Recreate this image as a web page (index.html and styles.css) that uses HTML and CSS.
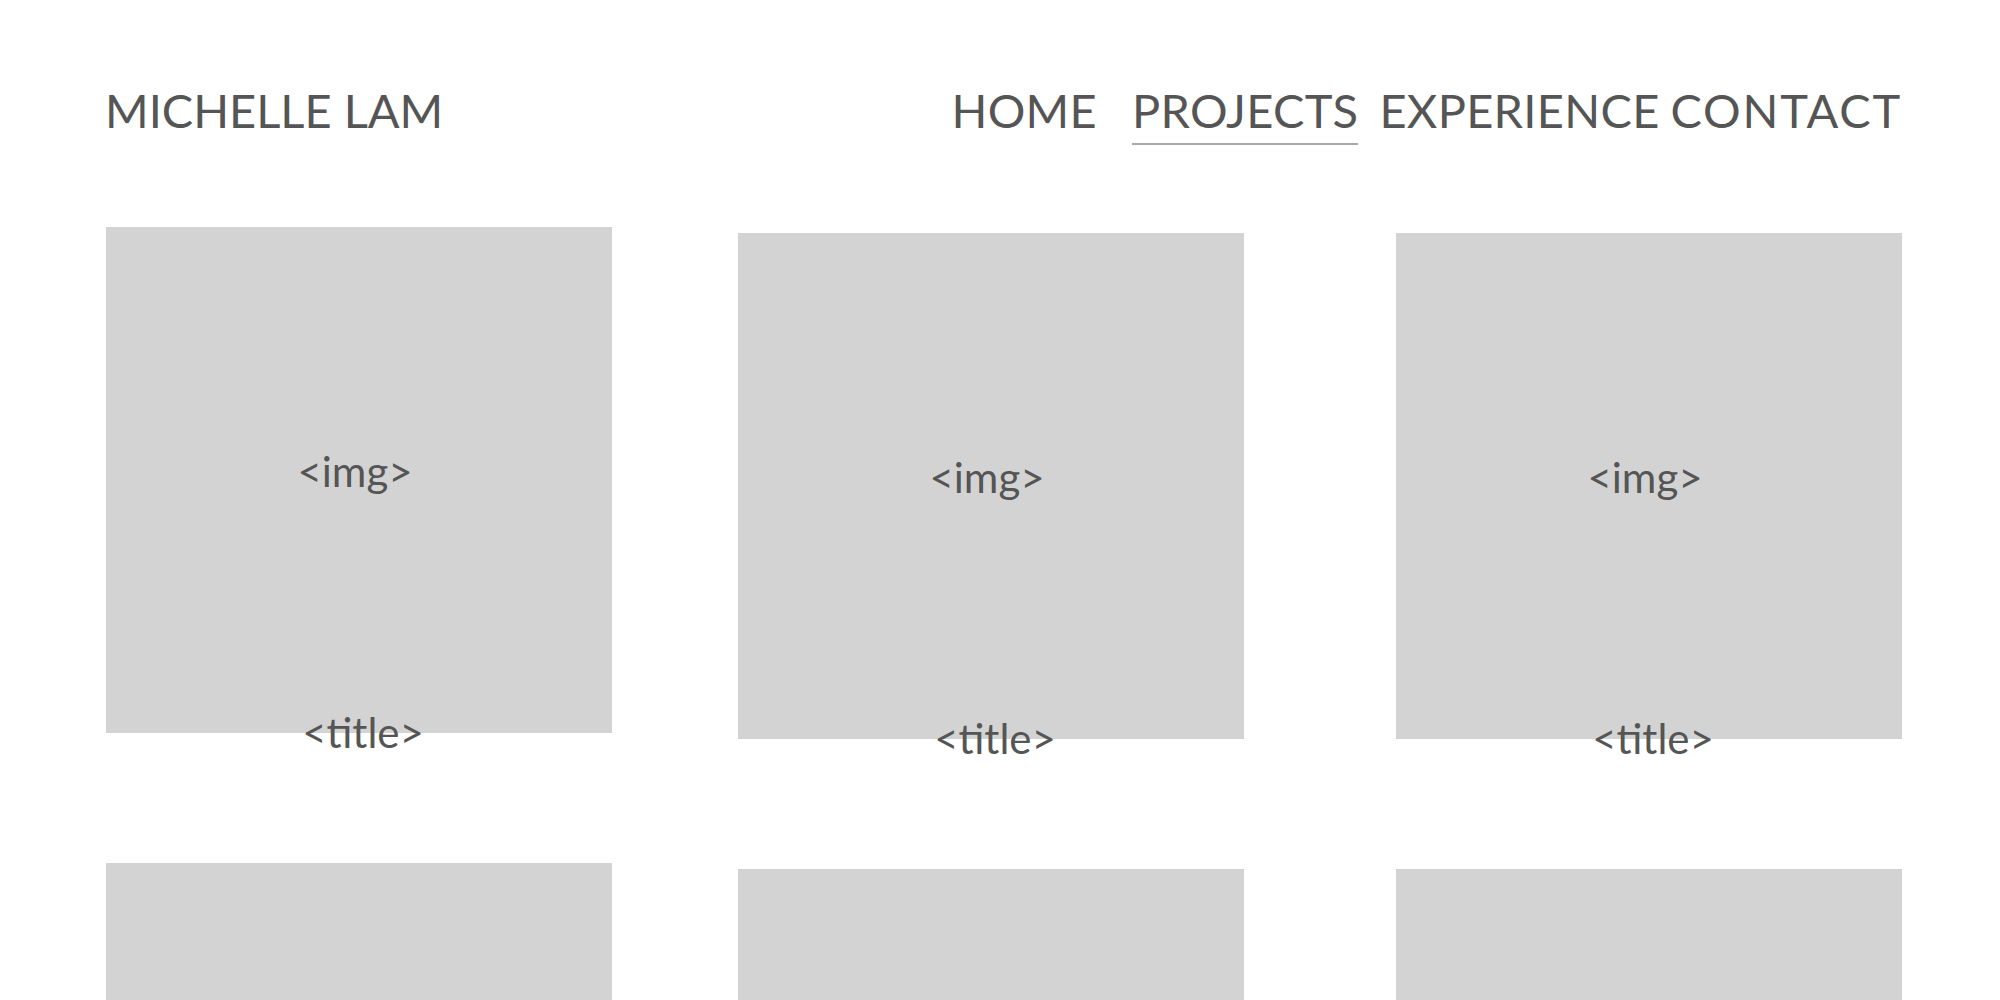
FILE: index.html
```html
<!DOCTYPE html>
<html lang="en">
<head>
<meta charset="utf-8">
<title>Michelle Lam — Projects</title>
<link rel="stylesheet" href="styles.css">
</head>
<body>
<header class="site-header">
  <div class="brand">MICHELLE LAM</div>
  <nav class="nav">
    <a class="nav-link nav-home" href="#">HOME</a>
    <a class="nav-link nav-projects active" href="#">PROJECTS</a>
    <a class="nav-link nav-experience" href="#">EXPERIENCE</a>
    <a class="nav-link nav-contact" href="#">CONTACT</a>
  </nav>
</header>
<main class="projects">
  <div class="card card-first">
    <div class="thumb"><span class="thumb-label">&lt;img&gt;</span></div>
    <div class="card-title">&lt;title&gt;</div>
  </div>
  <div class="card card-mid">
    <div class="thumb"><span class="thumb-label">&lt;img&gt;</span></div>
    <div class="card-title">&lt;title&gt;</div>
  </div>
  <div class="card card-last">
    <div class="thumb"><span class="thumb-label">&lt;img&gt;</span></div>
    <div class="card-title">&lt;title&gt;</div>
  </div>
  <div class="card card-first">
    <div class="thumb"><span class="thumb-label">&lt;img&gt;</span></div>
    <div class="card-title">&lt;title&gt;</div>
  </div>
  <div class="card card-mid">
    <div class="thumb"><span class="thumb-label">&lt;img&gt;</span></div>
    <div class="card-title">&lt;title&gt;</div>
  </div>
  <div class="card card-last">
    <div class="thumb"><span class="thumb-label">&lt;img&gt;</span></div>
    <div class="card-title">&lt;title&gt;</div>
  </div>
</main>
</body>
</html>
```
FILE: styles.css
```css
html, body {
  margin: 0;
  padding: 0;
  background: #ffffff;
}

body {
  font-family: "Lato", "Liberation Sans", sans-serif;
  color: #555555;
  overflow: hidden;
}

.site-header {
  display: flex;
  justify-content: space-between;
  align-items: flex-start;
  padding: 82px 98px 0 105px;
  height: 143px;
  box-sizing: border-box;
}

.brand {
  font-size: 47px;
  line-height: 56px;
  letter-spacing: 0;
}

.nav {
  display: flex;
  align-items: flex-start;
}

.nav-link {
  font-size: 47px;
  line-height: 56px;
  color: #555555;
  text-decoration: none;
  letter-spacing: 0.3px;
  padding-bottom: 5px;
}

.nav-projects {
  margin-left: 35px;
  border-bottom: 2px solid #a8a8a8;
}

.nav-experience {
  margin-left: 21px;
}

.nav-contact {
  margin-left: 11px;
  letter-spacing: 1.8px;
}

.projects {
  display: flex;
  flex-wrap: wrap;
  align-items: flex-start;
  padding: 84px 0 0 106px;
}

.card {
  width: 506px;
  height: 630px;
}

.card-mid {
  margin-left: 126px;
  margin-top: 6px;
}

.card-last {
  margin-left: 152px;
  margin-top: 6px;
}

.thumb {
  height: 506px;
  background: #d3d3d3;
  display: flex;
  align-items: center;
  justify-content: center;
}

.thumb-label {
  font-size: 42px;
  line-height: 50px;
  padding-right: 8px;
  margin-top: -18px;
}

.card-title {
  font-size: 42px;
  line-height: 50px;
  text-align: center;
  padding-left: 8px;
  margin-top: -26px;
}
```
